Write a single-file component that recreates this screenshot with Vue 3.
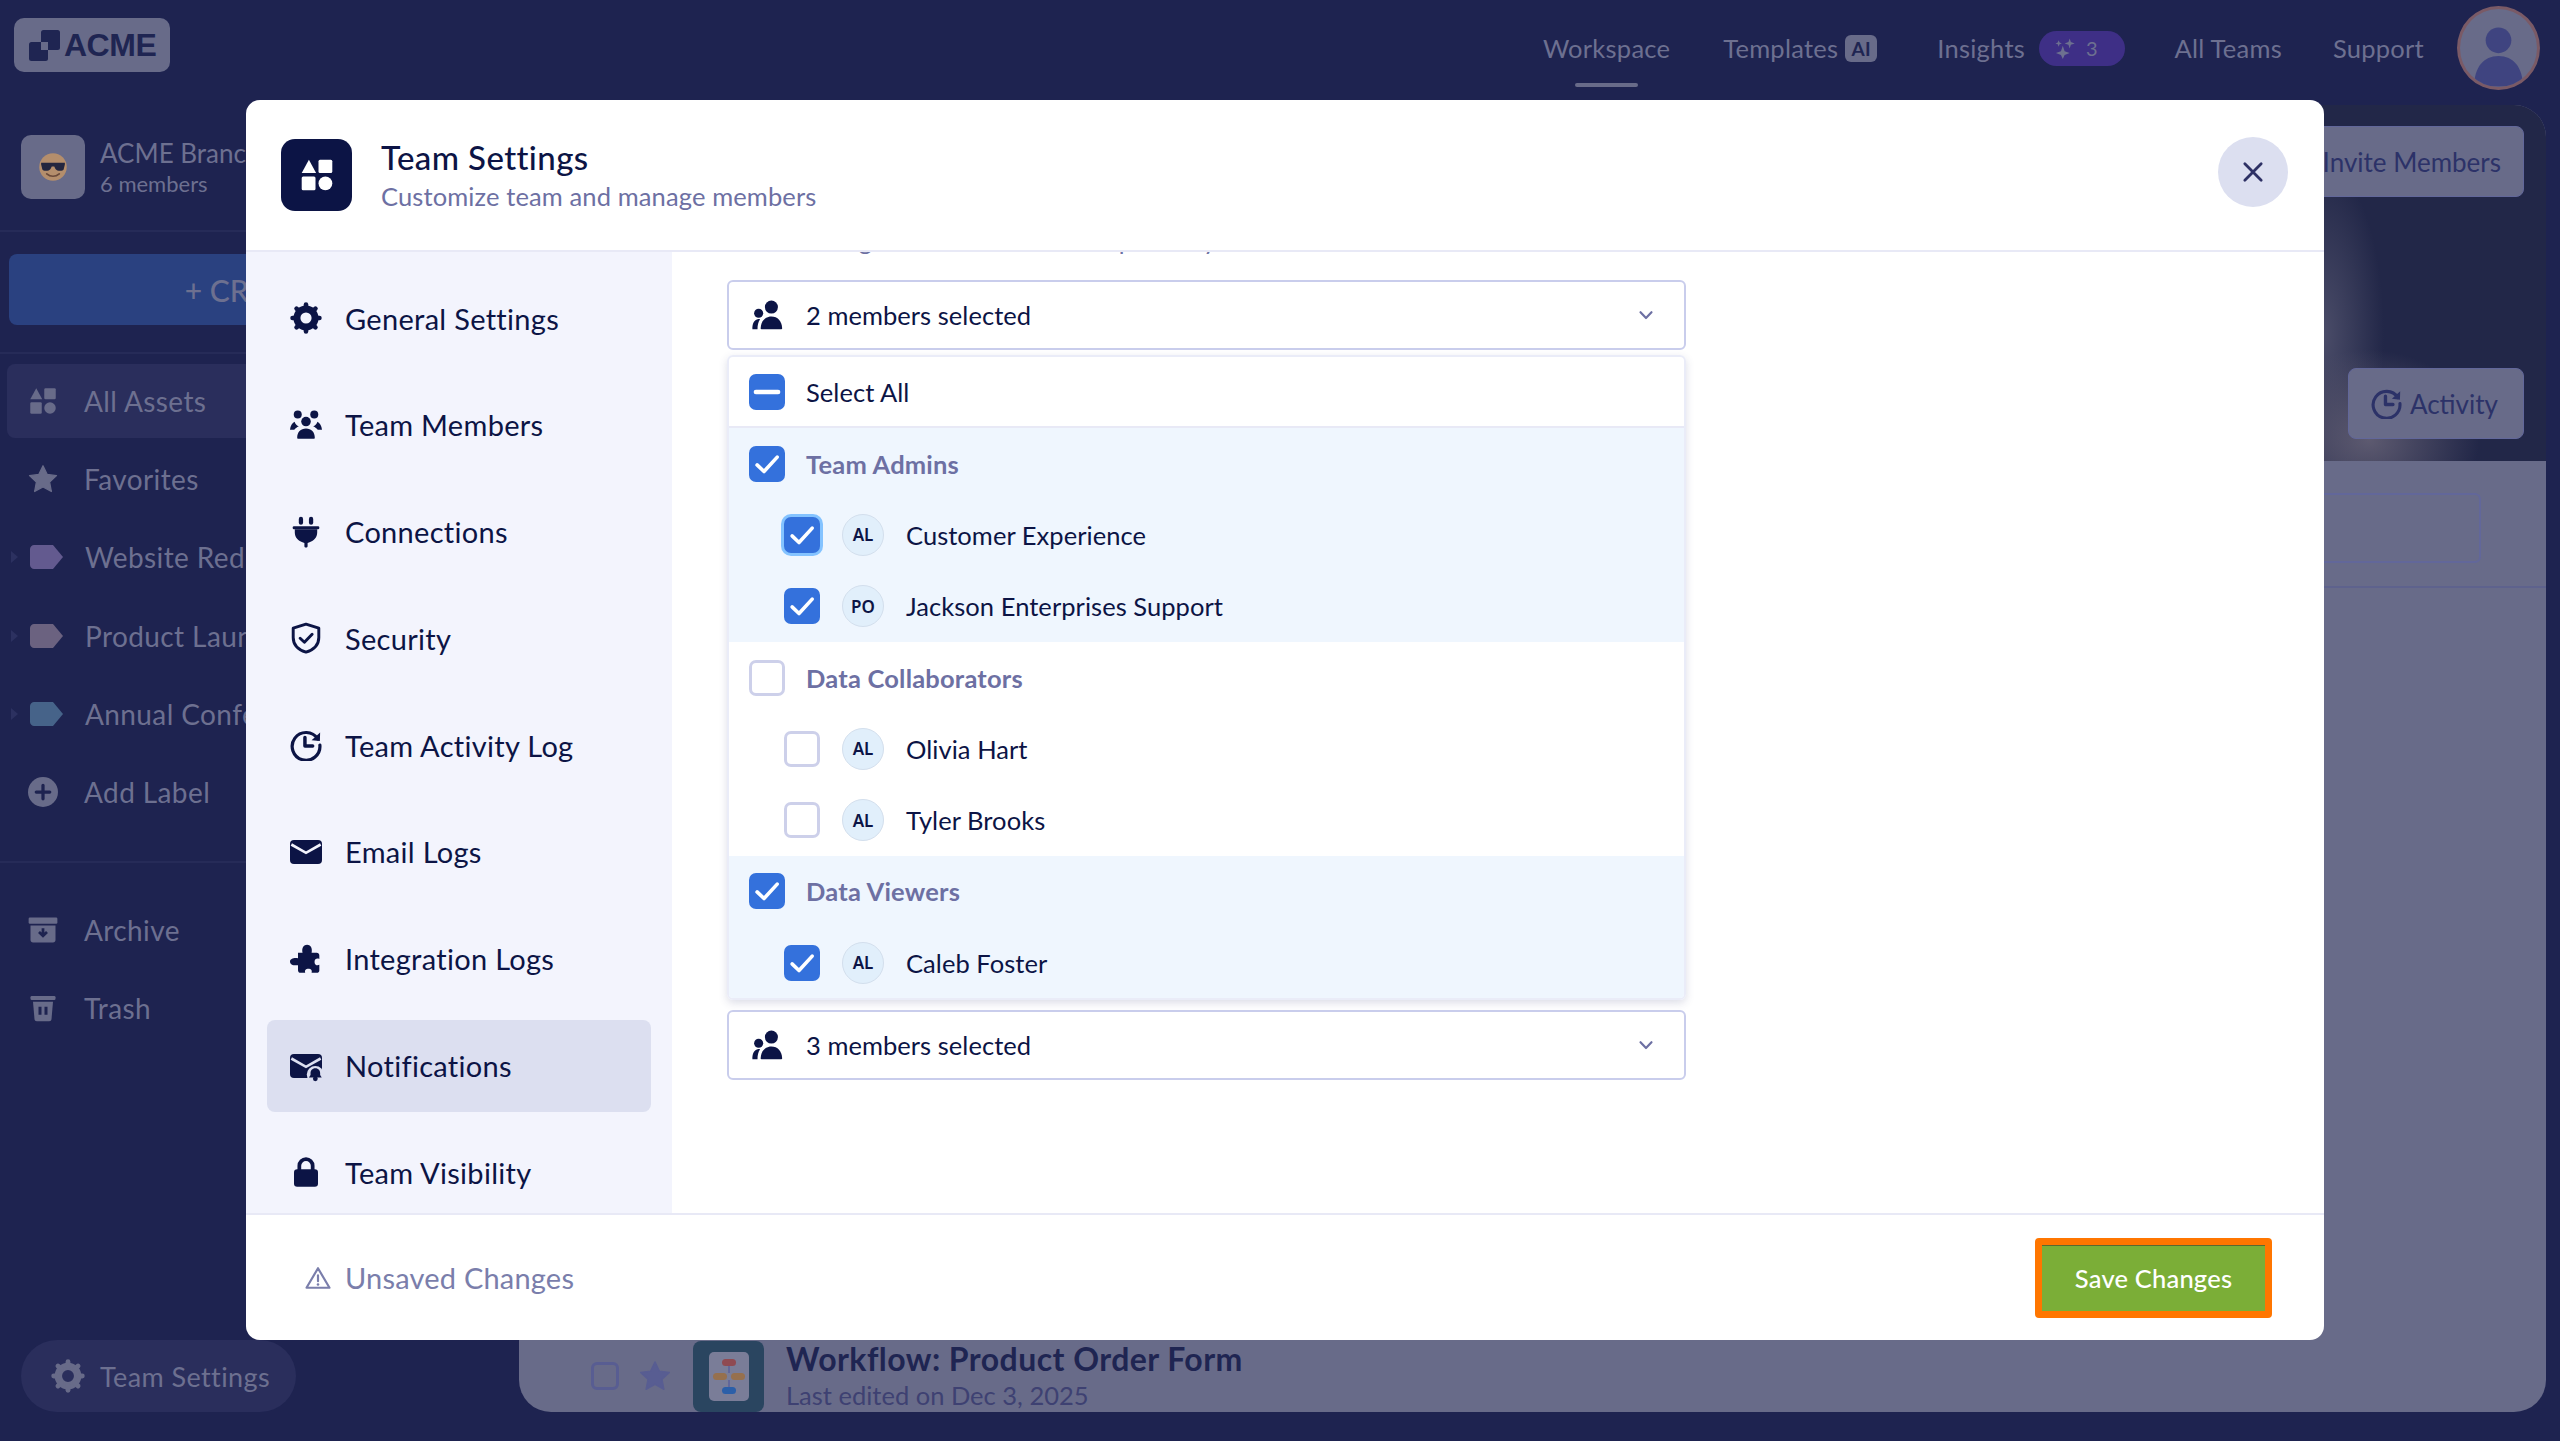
<script setup>
import { h } from 'vue'

const ICONS = {
  assets: '<path d="M6.6 1.8 11.4 10.6H1.8Z"/><rect x="13" y="1.8" width="9.2" height="8.8" rx="1"/><rect x="1.8" y="13" width="9.2" height="9.2" rx="1"/><circle cx="17.6" cy="17.6" r="4.6"/>',
  gear: '<circle cx="12" cy="12" r="6.8" fill="none" stroke="currentColor" stroke-width="5.2"/><g stroke="currentColor" stroke-width="3.4" stroke-linecap="round"><path d="M12 1.9V5"/><path d="M12 19v3.1"/><path d="M1.9 12H5"/><path d="M19 12h3.1"/><path d="m4.9 4.900 2.200 2.200"/><path d="m16.900 16.900 2.200 2.200"/><path d="m19.100 4.900-2.200 2.200"/><path d="m7.100 16.900-2.200 2.200"/></g>',
  team: '<circle cx="5.8" cy="4.2" r="3"/><circle cx="18.2" cy="4.2" r="3"/><circle cx="12" cy="9.4" r="3.6"/><path d="M5.4 21.6c0-4.4 2.6-7 6.6-7s6.6 2.6 6.6 7c0 .5-.3.8-.8.8H6.2c-.5 0-.8-.3-.8-.8Z"/><path d="M0 15.6c.3-3 1.6-5 3.4-6 .7 2 1.8 3 3.2 3.4-1.6.8-2.6 1.6-3.4 2.6Z"/><path d="M24 15.6c-.3-3-1.6-5-3.4-6-.7 2-1.8 3-3.2 3.4 1.6.8 2.6 1.6 3.4 2.6Z"/>',
  plug: '<rect x="6.6" y="0.6" width="3.2" height="6" rx="1.6"/><rect x="14.2" y="0.6" width="3.2" height="6" rx="1.6"/><rect x="2" y="7.6" width="20" height="2.4" rx="1"/><path d="M3.6 10h16.8v2.4c0 3.6-2.6 6.4-6.2 7.4l-1 .4v2.4c0 .6-.5 1-1.2 1s-1.2-.4-1.2-1v-2.4l-1-.4C6.2 18.8 3.6 16 3.6 12.4Z"/>',
  shield: '<path d="M12 1.6 21.6 4.6V11.6c0 5.2-3.8 9.2-9.6 11-5.8-1.8-9.6-5.8-9.6-11V4.6Z" fill="none" stroke="currentColor" stroke-width="2.2" stroke-linejoin="round"/><path d="m7.6 12.2 3.2 3 5.8-6" fill="none" stroke="currentColor" stroke-width="2.2" stroke-linecap="round" stroke-linejoin="round"/>',
  history: '<path d="M20.8 7.4A10.4 10.4 0 1 0 22.4 12" fill="none" stroke="currentColor" stroke-width="2.4" stroke-linecap="round"/><path d="M22.6 2.6 22.4 9 16.2 8.4Z"/><path d="M11.2 6.4V12.8H17" fill="none" stroke="currentColor" stroke-width="2.6" stroke-linecap="round" stroke-linejoin="round"/>',
  mail: '<rect x="0" y="3" width="24" height="18" rx="3"/><path d="M1 6.4 12 12.6 23 6.4" fill="none" stroke="#f3f4fd" stroke-width="2"/>',
  mailbell: '<rect x="0" y="3" width="24" height="18" rx="3"/><path d="M1 6.4 12 12.6 23 6.4" fill="none" stroke="#dcdff0" stroke-width="2"/><circle cx="19" cy="18.4" r="6.4" fill="#dcdff0"/><path d="M19 13.6c2.4 0 3.6 1.8 3.6 3.6v1.6l1.2 1.8H14.2l1.2-1.8v-1.6c0-1.8 1.2-3.6 3.6-3.6Z"/><circle cx="19" cy="21.6" r="1.8"/>',
  puzzle: '<path d="M6 7.4h3.4C8.6 3.4 10.4 1.4 12.8 1.4s4.2 2 3.4 6H20c1.2 0 2 .8 2 2V12c-1.6-.8-3.6-.2-3.6 2.2s2 3 3.6 2.2V20.6c0 1-.8 1.8-2 1.8h-3.8c.6-2-.6-3-2.4-3s-3 1-2.4 3H8c-1.2 0-2-.8-2-2v-3.8c-3 .6-6-.4-6-2.6s3-3.2 6-2.6Z"/>',
  lock: '<path d="M7 11V7.4a5 5 0 0 1 10 0V11" fill="none" stroke="currentColor" stroke-width="2.8"/><rect x="3" y="10" width="18" height="13" rx="2.4"/>',
  warn: '<path d="M12 3 22.6 21H1.4Z" fill="none" stroke="currentColor" stroke-width="2" stroke-linejoin="round"/><path d="M12 9.6v5.4" stroke="currentColor" stroke-width="2" stroke-linecap="round"/><circle cx="12" cy="18" r="1.2"/>',
  people: '<circle cx="14.4" cy="6.4" r="4.6"/><path d="M6.8 21.4c.2-5.2 3.2-8.4 7.6-8.4s7.4 3.2 7.6 8.4c0 .4-.2.6-.6.6H7.4c-.4 0-.6-.2-.6-.6Z"/><circle cx="5.4" cy="10.8" r="3.2"/><path d="M1 22c-.2-3.4 1-6.6 4.2-7.2.6 0 1 .1 1.2.2C5 17 4.6 19.4 4.6 22Z"/>',
  chevron: '<path d="m5.4 8.6 6.6 7 6.6-7" fill="none" stroke="currentColor" stroke-width="2.6" stroke-linecap="round" stroke-linejoin="round"/>',
  close: '<path d="M5 5 19 19M19 5 5 19" fill="none" stroke="currentColor" stroke-width="2.4" stroke-linecap="round"/>',
  check: '<path d="M5.4 12.6 10 17 18.8 7.4" fill="none" stroke="#fff" stroke-width="2.4" stroke-linecap="round" stroke-linejoin="round"/>',
  minus: '<path d="M4.6 12H19.4" fill="none" stroke="#fff" stroke-width="3" stroke-linecap="round"/>',
  star: '<path d="M12 1.4 15.3 8.3 22.8 9.3 17.3 14.5 18.7 22 12 18.4 5.3 22 6.7 14.5 1.2 9.3 8.7 8.3Z" stroke="currentColor" stroke-width="1" stroke-linejoin="round"/>',
  plus: '<circle cx="12" cy="12" r="12"/><path d="M12 6.6v10.8M6.6 12h10.8" stroke="#1e2350" stroke-width="2.6" stroke-linecap="round"/>',
  archive: '<rect x="0.5" y="2" width="23" height="5" rx="1"/><path d="M2 8.4h20V20c0 1.2-.8 2-2 2H4c-1.2 0-2-.8-2-2Z"/><path d="M12 10.6v5.4M8.8 13.6 12 16.6l3.2-3" fill="none" stroke="#1e2350" stroke-width="2.2"/>',
  trash: '<rect x="2" y="2.4" width="20" height="3.2" rx="1"/><path d="M4 7h16l-1.2 14c-.1 1-.8 1.6-1.8 1.6H7c-1 0-1.700-.6-1.800-1.600Z"/><path d="M9.600 11v6.400M14.400 11v6.400" stroke="#1e2350" stroke-width="2.400"/>',
  sparkle: '<path d="M8.500 9.500 10.500 15.500 16 17.500 10.500 19.500 8.500 24 6.500 19.500 1 17.500 6.500 15.500Z"/><path d="M16 1.500 17.300 5.500 21.500 7 17.300 8.500 16 12.500 14.700 8.500 10.500 7 14.700 5.500Z"/><path d="M4 3.500 5 6 7.500 7 5 8 4 10.500 3 8 0.500 7 3 6Z"/>',
  user: '<circle cx="12" cy="9.600" r="4"/><path d="M4.400 24c0-6 3-9.500 7.600-9.500s7.600 3.500 7.600 9.500Z"/>',
}

const Icon = (props) =>
  h('svg', { viewBox: '0 0 24 24', fill: 'currentColor', innerHTML: ICONS[props.name] })
Icon.props = ['name']

const navItems = [
  { label: 'General Settings', icon: 'gear' },
  { label: 'Team Members', icon: 'team' },
  { label: 'Connections', icon: 'plug' },
  { label: 'Security', icon: 'shield' },
  { label: 'Team Activity Log', icon: 'history' },
  { label: 'Email Logs', icon: 'mail' },
  { label: 'Integration Logs', icon: 'puzzle' },
  { label: 'Notifications', icon: 'mailbell', active: true },
  { label: 'Team Visibility', icon: 'lock' },
]

const groups = [
  {
    name: 'Team Admins',
    on: true,
    members: [
      { initials: 'AL', name: 'Customer Experience', on: true, focus: true },
      { initials: 'PO', name: 'Jackson Enterprises Support', on: true },
    ],
  },
  {
    name: 'Data Collaborators',
    on: false,
    members: [
      { initials: 'AL', name: 'Olivia Hart', on: false },
      { initials: 'AL', name: 'Tyler Brooks', on: false },
    ],
  },
  {
    name: 'Data Viewers',
    on: true,
    members: [{ initials: 'AL', name: 'Caleb Foster', on: true }],
  },
]

const labels = [
  { name: 'Website Redesign', color: '#635a8f' },
  { name: 'Product Launch', color: '#6b6280' },
  { name: 'Annual Conference', color: '#466389' },
]
</script>

<template>
  <div class="page">
    <header class="topbar">
      <div class="logo">
        <svg class="logo-mark" viewBox="0 0 31 31">
          <rect x="12" y="0" width="19" height="20" rx="2.500" fill="#1f2552" />
          <rect x="0" y="12" width="19" height="19" rx="2.500" fill="#1f2552" />
          <rect x="12" y="12" width="7" height="8" fill="#686b89" />
        </svg>
        <span class="logo-text">ACME</span>
      </div>
      <nav class="topnav">
        <a class="tn tn-active">Workspace</a>
        <a class="tn tn-templates">Templates<span class="ai">AI</span></a>
        <a class="tn tn-insights">Insights<span class="count"><Icon name="sparkle" class="spark" />3</span></a>
        <a class="tn tn-teams">All Teams</a>
        <a class="tn">Support</a>
        <span class="avatar"><Icon name="user" class="avatar-ic" /></span>
      </nav>
    </header>

    <div class="shell">
      <aside class="side">
        <div class="brand">
          <div class="brand-pic">
            <svg viewBox="0 0 24 24" class="emoji">
              <circle cx="12" cy="12" r="11" fill="#b48e6c" />
              <path d="M2.500 8.500h19v1.500l-1 4c-.5 1.500-5.500 1.500-6.500-.5l-1-2h-2l-1 2c-1 2-6 2-6.500.5l-1-4Z" fill="#23263f" />
              <path d="M7 17.500c3 2.500 7 2.500 10 0" fill="none" stroke="#6a4a3a" stroke-width="1.400" stroke-linecap="round" />
            </svg>
          </div>
          <div class="brand-text">
            <div class="brand-name">ACME Branch</div>
            <div class="brand-sub">6 members</div>
          </div>
        </div>
        <div class="create-wrap"><button class="create">+ CREATE</button></div>
        <div class="side-menu">
          <div class="sm sm-active"><Icon name="assets" class="sm-ic" />All Assets</div>
          <div class="sm"><Icon name="star" class="sm-ic" />Favorites</div>
          <div v-for="l in labels" :key="l.name" class="sm sm-label">
            <span class="caret"></span>
            <svg class="tag" viewBox="0 0 33 24"><path d="M4 0h19l10 12-10 12H4c-2 0-4-2-4-4V4c0-2 2-4 4-4Z" :fill="l.color" /></svg>
            {{ l.name }}
          </div>
          <div class="sm"><Icon name="plus" class="sm-ic" />Add Label</div>
        </div>
        <div class="side-menu side-second">
          <div class="sm"><Icon name="archive" class="sm-ic" />Archive</div>
          <div class="sm"><Icon name="trash" class="sm-ic" />Trash</div>
        </div>
        <div class="side-foot">
          <div class="pill"><Icon name="gear" class="pill-ic" />Team Settings</div>
        </div>
      </aside>

      <main class="panel">
        <div class="cover">
          <button class="ghost">Invite Members</button>
          <button class="ghost ghost-activity"><Icon name="history" class="ghost-ic" />Activity</button>
        </div>
        <div class="tools"><div class="search"></div></div>
        <div class="rows">
          <div class="row">
            <span class="row-check"></span>
            <Icon name="star" class="row-star" />
            <div class="thumb">
              <div class="thumb-card">
                <span class="nd nd-red"></span>
                <span class="wire"></span>
                <span class="nd-pair"><span class="nd nd-tan"></span><span class="nd nd-tan"></span></span>
                <span class="wire"></span>
                <span class="nd nd-blue"></span>
              </div>
            </div>
            <div>
              <div class="row-title">Workflow: Product Order Form</div>
              <div class="row-sub">Last edited on Dec 3, 2025</div>
            </div>
          </div>
        </div>
      </main>
    </div>

    <section class="modal">
      <header class="m-head">
        <div class="m-badge"><Icon name="assets" class="m-badge-ic" /></div>
        <div class="m-titles">
          <div class="m-title">Team Settings</div>
          <div class="m-sub">Customize team and manage members</div>
        </div>
        <button class="m-close"><Icon name="close" class="m-close-ic" /></button>
      </header>

      <div class="m-body">
        <nav class="m-nav">
          <div v-for="n in navItems" :key="n.label" class="mn" :class="{ 'mn-active': n.active }">
            <span class="mn-ic"><Icon :name="n.icon" class="mn-svg" /></span>
            {{ n.label }}
          </div>
        </nav>

        <div class="m-content">
          <p class="desc">Select the agents who will see an update by email</p>

          <div class="dd">
            <Icon name="people" class="dd-ic" />
            <span class="dd-text">2 members selected</span>
            <Icon name="chevron" class="dd-chev" />
          </div>

          <div class="list">
            <div class="li li-all">
              <span class="cb cb-on"><Icon name="minus" class="cb-ic" /></span>
              <span class="li-name">Select All</span>
            </div>
            <div v-for="g in groups" :key="g.name" class="grp" :class="{ 'grp-on': g.on }">
              <div class="li">
                <span class="cb" :class="{ 'cb-on': g.on }"><Icon v-if="g.on" name="check" class="cb-ic" /></span>
                <span class="li-group">{{ g.name }}</span>
              </div>
              <div v-for="m in g.members" :key="m.name" class="li li-member">
                <span class="cb" :class="{ 'cb-on': m.on, 'cb-focus': m.focus }"><Icon v-if="m.on" name="check" class="cb-ic" /></span>
                <span class="init">{{ m.initials }}</span>
                <span class="li-name">{{ m.name }}</span>
              </div>
            </div>
          </div>

          <div class="dd dd-second">
            <Icon name="people" class="dd-ic" />
            <span class="dd-text">3 members selected</span>
            <Icon name="chevron" class="dd-chev" />
          </div>
        </div>
      </div>

      <footer class="m-foot">
        <div class="unsaved"><Icon name="warn" class="warn-ic" />Unsaved Changes</div>
        <button class="save">Save Changes</button>
      </footer>
    </section>
  </div>
</template>

<style>
html, body { margin: 0; background: #1e2350; }
</style>

<style scoped>
* { box-sizing: border-box; }
.page {
  position: relative;
  width: 2560px;
  height: 1441px;
  overflow: hidden;
  background: #1e2350;
  font-family: Lato, "Open Sans", sans-serif;
  display: flex;
  flex-direction: column;
}
button { font-family: inherit; border: 0; }

/* top bar */
.topbar {
  height: 105px;
  flex: none;
  display: flex;
  justify-content: space-between;
  align-items: flex-start;
  padding: 18px 20px 0 14px;
}
.logo {
  width: 156px;
  height: 54px;
  border-radius: 10px;
  background: #686b89;
  display: flex;
  align-items: center;
  gap: 4px;
  padding-left: 15px;
}
.logo-mark { width: 31px; height: 31px; }
.logo-text {
  font-family: "Liberation Sans", sans-serif;
  font-weight: 700;
  font-size: 32px;
  letter-spacing: -0.5px;
  color: #1f2552;
}
.topnav {
  display: flex;
  align-items: center;
  margin-top: -13px;
  height: 86px;
}
.tn {
  position: relative;
  display: flex;
  align-items: center;
  font-size: 25.500px;
  letter-spacing: 0.25px;
  color: #6d7090;
  margin-right: 53px;
}
.tn-templates { margin-right: 60px; }
.tn-insights { margin-right: 49.500px; }
.tn-teams { margin-right: 51px; }
.tn-active::after {
  content: "";
  position: absolute;
  left: 32px;
  right: 32px;
  top: 50px;
  height: 4px;
  border-radius: 2px;
  background: #686b89;
}
.ai {
  width: 32px;
  height: 27px;
  margin-left: 7px;
  border-radius: 6px;
  background: #686b89;
  color: #1f2552;
  font-size: 19px;
  font-weight: 700;
  display: flex;
  align-items: center;
  justify-content: center;
}
.count {
  width: 86px;
  height: 35px;
  margin-left: 14px;
  border-radius: 18px;
  background: #3e2f86;
  font-size: 20px;
  color: #6d7090;
  display: flex;
  align-items: center;
  padding-left: 16px;
  gap: 9px;
}
.spark { width: 22px; height: 22px; }
.avatar {
  width: 83px;
  height: 84px;
  border-radius: 50%;
  border: 3px solid #7a5a66;
  background: #686b89;
  overflow: hidden;
  display: flex;
  margin-left: -20px;
}
.avatar-ic { width: 78px; height: 78px; color: #3f4480; }

/* shell */
.shell { flex: 1; display: flex; min-height: 0; }
.side {
  width: 519px;
  flex: none;
  display: flex;
  flex-direction: column;
  color: #6d7090;
}
.brand {
  height: 127px;
  border-bottom: 2px solid #262b58;
  padding: 30px 0 0 21px;
  display: flex;
  gap: 15px;
}
.brand-pic {
  width: 64px;
  height: 64px;
  border-radius: 10px;
  background: #686b89;
  display: flex;
  align-items: center;
  justify-content: center;
}
.emoji { width: 30px; height: 30px; }
.brand-name { font-size: 26px; line-height: 32px; margin-top: 2px; }
.brand-sub { font-size: 22px; line-height: 30px; }
.create-wrap {
  height: 122px;
  border-bottom: 2px solid #262b58;
  padding: 22px 0 0 9px;
}
.create {
  width: 486px;
  height: 71px;
  border-radius: 8px;
  background: #2a4180;
  color: #6d7090;
  font-size: 30px;
  font-weight: 500;
}
.side-menu {
  display: flex;
  flex-direction: column;
  gap: 4.200px;
  padding: 10px 7px 32px;
  border-bottom: 2px solid #262b58;
}
.side-second { border: 0; padding-top: 30px; }
.sm {
  position: relative;
  height: 74px;
  border-radius: 8px;
  display: flex;
  align-items: center;
  padding-left: 21px;
  font-size: 28px;
  letter-spacing: 0.4px;
}
.sm-active { background: #2a2e5c; }
.sm-ic { width: 30px; height: 30px; margin-right: 26px; color: #686b89; flex: none; }
.sm-label { padding-left: 23px; }
.caret {
  position: absolute;
  left: 4px;
  border-left: 7px solid #2c3160;
  border-top: 6px solid transparent;
  border-bottom: 6px solid transparent;
}
.tag { width: 33px; height: 24px; margin-right: 22px; flex: none; }
.side-foot { margin-top: auto; padding: 0 0 29px 21px; }
.pill {
  width: 275px;
  height: 72px;
  border-radius: 36px;
  background: #2a2e5c;
  display: flex;
  align-items: center;
  padding-left: 30px;
  font-size: 27px;
  letter-spacing: 0.4px;
}
.pill-ic { width: 34px; height: 34px; margin-right: 15px; color: #686b89; }

/* panel */
.panel {
  flex: 1;
  margin: 0 14px 29px 0;
  border-radius: 32px;
  overflow: hidden;
  background: #686b89;
  display: flex;
  flex-direction: column;
}
.cover {
  height: 356px;
  flex: none;
  padding: 21px 22px 22px 0;
  display: flex;
  flex-direction: column;
  justify-content: space-between;
  align-items: flex-end;
  background:
    radial-gradient(ellipse 110px 90px at 1850px 335px, #5d5a70 0%, rgba(93, 90, 112, 0) 100%),
    radial-gradient(ellipse 60px 170px at 1805px 230px, #4a4c68 0%, rgba(74, 76, 104, 0) 100%),
    #222748;
}
.ghost {
  height: 71px;
  padding: 0 22px;
  border-radius: 8px;
  background: #686b89;
  border: 1px solid #62679a;
  color: #2c3268;
  font-size: 26px;
  display: flex;
  align-items: center;
}
.ghost-activity { padding-right: 25px; }
.ghost-ic { width: 31px; height: 31px; margin-right: 8px; }
.tools {
  height: 127px;
  flex: none;
  padding: 32px 65px 0 0;
  border-bottom: 2px solid #5e628d;
}
.search {
  height: 70px;
  border: 2px solid #62679a;
  border-radius: 6px;
}
.rows { flex: 1; display: flex; flex-direction: column; justify-content: flex-end; }
.row {
  height: 72px;
  display: flex;
  align-items: center;
  padding-left: 72px;
}
.row-check {
  width: 28px;
  height: 28px;
  border: 3px solid #585d92;
  border-radius: 6px;
  margin-right: 20px;
}
.row-star { width: 32px; height: 32px; color: #585d92; margin-right: 22px; }
.thumb {
  width: 71px;
  height: 71px;
  border-radius: 8px;
  background: #2a4560;
  display: flex;
  align-items: center;
  justify-content: center;
  margin-right: 22px;
}
.thumb-card {
  width: 40px;
  height: 49px;
  border-radius: 5px;
  background: #7a7d98;
  display: flex;
  flex-direction: column;
  align-items: center;
  padding-top: 7px;
}
.nd { display: block; width: 14px; height: 7px; border-radius: 4px; }
.nd-red { background: #8f4a52; }
.nd-tan { background: #96704e; }
.nd-blue { background: #2c5fa8; }
.nd-pair { display: flex; gap: 4px; }
.wire { width: 2px; height: 7px; background: #62679a; }
.row-title { font-size: 32px; line-height: 38px; font-weight: 700; letter-spacing: 0.45px; color: #1f2552; white-space: nowrap; margin-top: -3px; }
.row-sub { font-size: 25.500px; line-height: 30px; color: #3e4172; margin-top: 2px; }

/* modal */
.modal {
  position: absolute;
  left: 246px;
  top: 100px;
  width: 2078px;
  height: 1240px;
  background: #fff;
  border-radius: 14px;
  overflow: hidden;
  display: flex;
  flex-direction: column;
}
.m-head {
  height: 152px;
  flex: none;
  border-bottom: 2px solid #e8e9f6;
  display: flex;
  align-items: flex-start;
  padding: 39px 36px 0 35px;
}
.m-badge {
  width: 71px;
  height: 72px;
  border-radius: 14px;
  background: #0c1445;
  display: flex;
  align-items: center;
  justify-content: center;
  color: #fff;
}
.m-badge-ic { width: 36px; height: 36px; }
.m-titles { margin-left: 29px; flex: 1; }
.m-title { font-size: 33px; line-height: 37px; font-weight: 500; letter-spacing: 0.4px; color: #0c1445; }
.m-sub { font-size: 25.500px; line-height: 32px; letter-spacing: 0.12px; color: #6d70a3; margin-top: 4px; }
.m-close {
  width: 70px;
  height: 70px;
  margin-top: -2px;
  border-radius: 50%;
  background: #dcdff0;
  color: #2e3165;
  display: flex;
  align-items: center;
  justify-content: center;
  padding: 0;
}
.m-close-ic { width: 28px; height: 28px; }
.m-body { flex: 1; min-height: 0; display: flex; }
.m-nav {
  width: 426px;
  flex: none;
  background: #f3f4fd;
  padding: 20px 21px 0;
  overflow: hidden;
  display: flex;
  flex-direction: column;
  gap: 14.800px;
}
.mn {
  height: 92px;
  flex: none;
  border-radius: 8px;
  display: flex;
  align-items: center;
  gap: 15px;
  padding-left: 15px;
  font-size: 29px;
  letter-spacing: 0.3px;
  color: #0c1445;
}
.mn-active { background: #dcdff0; }
.mn-ic { width: 48px; display: flex; justify-content: center; }
.mn-svg { width: 32px; height: 32px; }
.m-content {
  flex: 1;
  min-width: 0;
  overflow: hidden;
  padding-left: 55px;
}
.desc {
  margin: -27px 0 25px;
  height: 30px;
  line-height: 30px;
  font-size: 25px;
  letter-spacing: 0.3px;
  color: #6d70a3;
  white-space: nowrap;
}
.dd {
  width: 959px;
  height: 70px;
  border: 2px solid #c9cdec;
  border-radius: 6px;
  display: flex;
  align-items: center;
  padding: 0 28px 0 22px;
  color: #0c1445;
}
.dd-second { margin-top: 10px; }
.dd-ic { width: 34px; height: 34px; margin-right: 21px; flex: none; }
.dd-text { flex: 1; font-size: 25.500px; letter-spacing: 0.05px; }
.dd-chev { width: 20px; height: 20px; color: #6d70a3; flex: none; }
.list {
  width: 959px;
  margin-top: 5px;
  border: 2px solid #eaecf8;
  border-radius: 6px;
  box-shadow: 0 3px 8px rgba(60, 65, 120, 0.18);
  overflow: hidden;
}
.li {
  height: 71.300px;
  display: flex;
  align-items: center;
  padding-left: 20px;
  color: #0c1445;
}
.li-all { height: 71px; border-bottom: 2px solid #e8e9f6; }
.li-member { padding-left: 55px; }
.grp-on { background: #eff6fe; }
.cb {
  width: 36px;
  height: 36px;
  flex: none;
  border: 3px solid #cdd0ea;
  border-radius: 7px;
  background: #fff;
  margin-right: 21px;
  display: flex;
}
.li-member .cb { margin-right: 22px; }
.cb-on { background: #3471dc; border: 0; }
.cb-focus { box-shadow: 0 0 0 3px #84c3ff; }
.cb-ic { width: 36px; height: 36px; }
.li-name { font-size: 25.500px; letter-spacing: 0.05px; }
.li-group { font-size: 25.500px; font-weight: 700; letter-spacing: 0.2px; color: #6d70a3; }
.init {
  width: 42px;
  height: 42px;
  flex: none;
  border-radius: 50%;
  background: #e1effb;
  border: 1px solid #d3dfed;
  font-family: "Noto Sans", sans-serif;
  font-size: 17px;
  font-weight: 600;
  display: flex;
  align-items: center;
  justify-content: center;
  margin-right: 22px;
}
.m-foot {
  height: 127px;
  flex: none;
  border-top: 2px solid #e8e9f6;
  display: flex;
  align-items: center;
  justify-content: space-between;
  padding: 0 52px 0 59px;
}
.unsaved {
  display: flex;
  align-items: center;
  font-size: 29px;
  letter-spacing: 0.2px;
  color: #7a7eab;
}
.warn-ic { width: 26px; height: 26px; margin-right: 14px; }
.save {
  width: 237px;
  height: 80px;
  border: 7px solid #ff7600;
  border-radius: 4px;
  background: #7bae37;
  box-shadow: inset 0 1px 0 #5a6a30;
  color: #fff;
  font-size: 25.500px;
  font-weight: 500;
  letter-spacing: 0.2px;
  padding: 0;
}
</style>
